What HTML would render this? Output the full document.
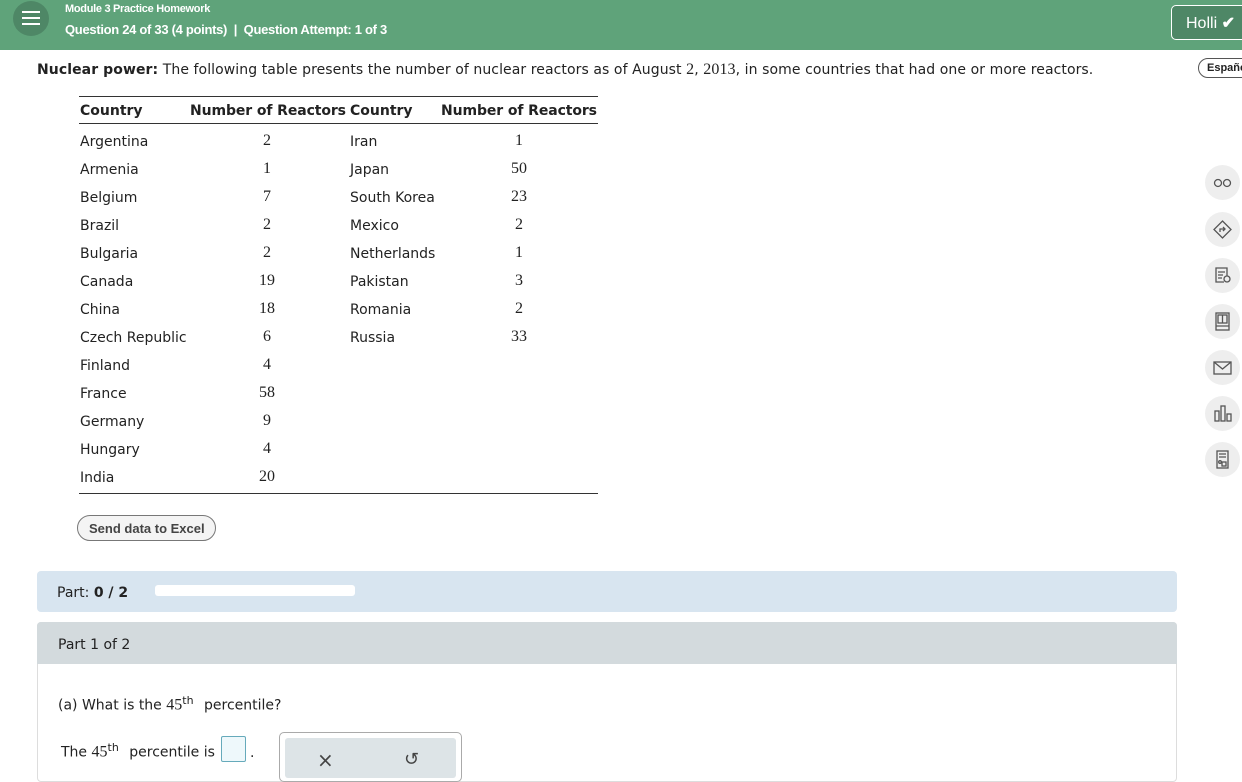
<!DOCTYPE html>
<html><head><meta charset="utf-8"><style>
*{margin:0;padding:0;box-sizing:border-box}
body{width:1242px;height:772px;overflow:hidden;background:#fff;font-family:"DejaVu Sans","Liberation Sans",sans-serif;font-size:14px;color:#222;position:relative}
.hdr{position:absolute;left:0;top:0;width:1242px;height:50px;background:#5fa37a}
.menu{position:absolute;left:13px;top:1px;width:36px;height:35px;border-radius:50%;background:#4e8766}
.menu i{position:absolute;left:9px;width:18px;height:2px;background:#fff}
.t1{position:absolute;left:65px;top:3px;color:#fff;font:bold 11px "Liberation Sans",sans-serif;letter-spacing:-0.3px}
.t2{position:absolute;left:65px;top:22px;color:#fff;font:bold 13px "Liberation Sans",sans-serif;letter-spacing:-0.3px}
.user{position:absolute;left:1171px;top:5px;width:90px;height:35px;border:1px solid #fff;border-radius:5px;background:#4e8766;color:#fff;font:16px "Liberation Sans",sans-serif;padding:7px 0 0 14px}
.esp{position:absolute;left:1198px;top:58px;width:60px;height:20px;border:1px solid #555;border-radius:10px;font:bold 11px "Liberation Sans",sans-serif;padding:3px 0 0 8px}
.abs{position:absolute;white-space:nowrap}
.num{font-family:"Liberation Serif",serif;font-size:16px}
.ic{position:absolute;left:1205px;width:35px;height:35px;border-radius:50%;background:#eee}
.ic svg{position:absolute;left:8px;top:8px}
sup{font-size:11px;margin-right:6px}
</style></head><body>
<div class="hdr"><div class="menu"><i style="top:10px"></i><i style="top:16px"></i><i style="top:22px"></i></div>
<div class="t1">Module 3 Practice Homework</div>
<div class="t2">Question 24 of 33 (4 points) &nbsp;|&nbsp; Question Attempt: 1 of 3</div>
<div class="user">Holli <span style="font-weight:bold">&#10004;</span></div></div>
<div class="esp">Españo</div>
<div class="abs" style="left:37px;top:61px;font-size:14px;letter-spacing:0.08px"><b>Nuclear power:</b> The following table presents the number of nuclear reactors as of August <span class="num">2</span>, <span class="num">2013</span>, in some countries that had one or more reactors.</div>
<div class="abs" style="left:79px;top:96px;width:519px;border-top:1px solid #333"></div>
<div class="abs" style="left:79px;top:123px;width:519px;border-top:1px solid #333"></div>
<div class="abs" style="left:79px;top:493px;width:519px;border-top:1px solid #333"></div>
<div class="abs" style="left:80px;top:103px;font-weight:bold">Country</div>
<div class="abs" style="left:190px;top:103px;font-weight:bold;letter-spacing:-0.1px">Number of Reactors</div>
<div class="abs" style="left:350px;top:103px;font-weight:bold">Country</div>
<div class="abs" style="left:441px;top:103px;font-weight:bold;letter-spacing:-0.1px">Number of Reactors</div>
<div id="rows"></div>
<script>
var a=[["Argentina",2,"Iran",1],["Armenia",1,"Japan",50],["Belgium",7,"South Korea",23],["Brazil",2,"Mexico",2],["Bulgaria",2,"Netherlands",1],["Canada",19,"Pakistan",3],["China",18,"Romania",2],["Czech Republic",6,"Russia",33],["Finland",4],["France",58],["Germany",9],["Hungary",4],["India",20]];
var h="";a.forEach(function(r,i){var y=134+i*28;
h+='<div class="abs" style="left:80px;top:'+y+'px">'+r[0]+'</div><div class="abs num" style="left:227px;width:80px;text-align:center;top:'+(y-2)+'px">'+r[1]+'</div>';
if(r[2])h+='<div class="abs" style="left:350px;top:'+y+'px">'+r[2]+'</div><div class="abs num" style="left:479px;width:80px;text-align:center;top:'+(y-2)+'px">'+r[3]+'</div>';});
document.getElementById("rows").innerHTML=h;
</script>
<div class="abs" style="left:77px;top:515px;width:139px;height:26px;border:1px solid #777;border-radius:13px;background:#f4f4f4;font:bold 13px 'Liberation Sans',sans-serif;color:#444;padding:5px 0 0 11px">Send data to Excel</div>
<div class="abs" style="left:37px;top:571px;width:1140px;height:41px;background:#d8e5f0;border-radius:4px"></div>
<div class="abs" style="left:57px;top:585px">Part: <b>0 / 2</b></div>
<div class="abs" style="left:155px;top:585px;width:200px;height:11px;background:#fff;border-radius:3px"></div>
<div class="abs" style="left:37px;top:622px;width:1140px;height:160px;border:1px solid #ddd;border-radius:4px"></div>
<div class="abs" style="left:37px;top:622px;width:1140px;height:42px;background:#d3dadd;border-radius:4px 4px 0 0"></div>
<div class="abs" style="left:58px;top:637px">Part 1 of 2</div>
<div class="abs" style="left:58px;top:694px">(a) What is the <span class="num">45</span><sup>th</sup> percentile?</div>
<div class="abs" style="left:61px;top:741px">The <span class="num">45</span><sup>th</sup> percentile is</div>
<div class="abs" style="left:221px;top:736px;width:25px;height:26px;border:1px solid #6ab;background:#eef8fb;border-radius:2px"></div>
<div class="abs" style="left:250px;top:745px">.</div>
<div class="abs" style="left:279px;top:732px;width:183px;height:50px;border:1px solid #aaa;border-radius:5px"></div>
<div class="abs" style="left:285px;top:738px;width:171px;height:40px;background:#dde4e7;border-radius:3px"></div>
<div class="abs" style="left:317px;top:748px;font-size:20px;color:#444">×</div>
<div class="abs" style="left:404px;top:749px;font-size:18px;color:#444">↺</div>
<div class="ic" style="top:165px"><svg width="19" height="19" fill="none" stroke="#555" stroke-width="1.3"><circle cx="5" cy="10" r="3.5"/><circle cx="14" cy="10" r="3.5"/></svg></div>
<div class="ic" style="top:212px"><svg width="19" height="19" fill="none" stroke="#555" stroke-width="1.3"><path d="M9.5 1L18 9.5 9.5 18 1 9.5Z"/><path d="M7 12V9h5M10 7l2 2-2 2"/></svg></div>
<div class="ic" style="top:258px"><svg width="19" height="19" fill="none" stroke="#555" stroke-width="1.3"><path d="M11 16H3V2h11v8M5 6h7M5 9h5M5 12h4"/><circle cx="14" cy="13" r="3"/></svg></div>
<div class="ic" style="top:304px"><svg width="19" height="19" fill="none" stroke="#555" stroke-width="1.3"><rect x="3" y="1" width="13" height="17"/><rect x="5" y="3" width="9" height="8"/><path d="M9.5 3v8M3 14h13"/></svg></div>
<div class="ic" style="top:350px"><svg width="19" height="19" fill="none" stroke="#555" stroke-width="1.3"><rect x="1" y="4" width="17" height="12"/><path d="M1 4l8.5 7L18 4"/></svg></div>
<div class="ic" style="top:396px"><svg width="19" height="19" fill="none" stroke="#555" stroke-width="1.3"><rect x="2" y="7" width="4" height="10"/><rect x="8" y="2" width="4" height="15"/><rect x="14" y="10" width="4" height="7"/></svg></div>
<div class="ic" style="top:442px"><svg width="19" height="19" fill="none" stroke="#555" stroke-width="1.3"><rect x="4" y="1" width="11" height="17"/><path d="M6 4h7M6 7h7"/><circle cx="7" cy="12" r="1.3"/><rect x="9" y="12" width="4" height="4"/></svg></div>
</body></html>
